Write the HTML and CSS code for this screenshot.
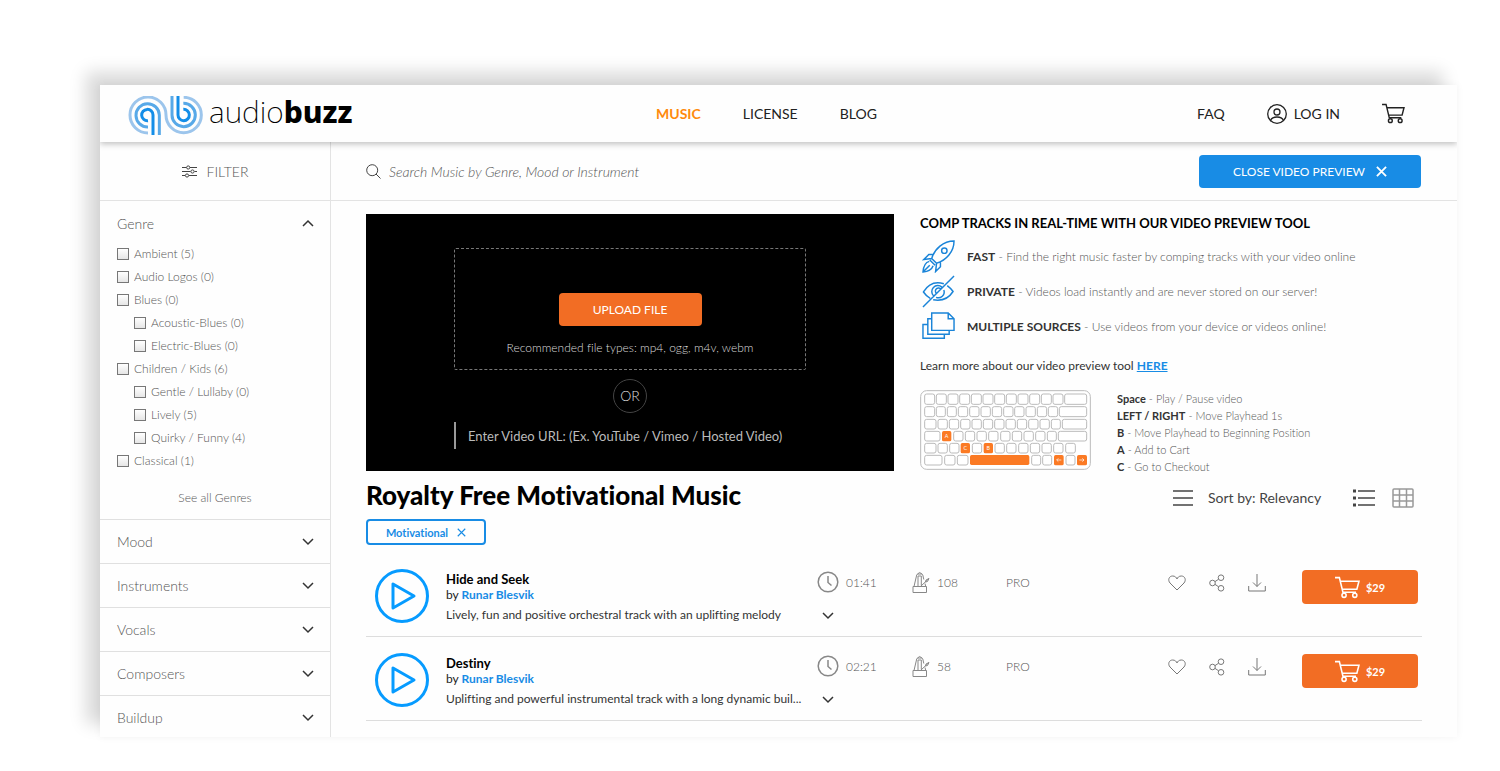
FILE: index.html
```html
<!DOCTYPE html>
<html lang="en">
<head>
  <meta charset="UTF-8">
  <meta name="viewport" content="width=device-width, initial-scale=1">
  <title>Royalty Free Motivational Music | audiobuzz</title>
  <link rel="stylesheet" href="styles.css">
</head>
<body>
  <!-- shared icons -->
  <svg class="sprite" aria-hidden="true">
    <symbol id="cart" viewBox="0 0 24 22">
      <path d="M0 1.500h4.200l3.400 14h12.600M5 5h18l-2 7.700H6.900"/>
      <circle cx="8.700" cy="18.500" r="2"/><circle cx="19" cy="18.500" r="2"/>
    </symbol>
    <symbol id="chevron" viewBox="0 0 12 8"><path d="M1 1l5 5 5-5"/></symbol>
    <symbol id="close" viewBox="0 0 12 12"><path d="M1 1l10 10M11 1L1 11"/></symbol>
    <symbol id="play" viewBox="0 0 54 54">
      <circle cx="27" cy="27" r="25.500"/><path d="M18 15v24l21-12z"/>
    </symbol>
    <symbol id="clock" viewBox="0 0 22 22">
      <circle cx="11" cy="11" r="9.800"/><path d="M11 5v6.500l3.500 3"/>
    </symbol>
    <symbol id="metronome" viewBox="0 0 18 22">
      <path d="M1 15.500h13.500v6H1zM2 15.500L4.700 4q.3-1 1.300-1h3.500q1 0 1.300 1l1 4.500M13 12.500l.7 3M6 15V5h3.300v9.500M9 15l8-7.500M13.500 11l.5-2 3-1.500-1.500 3zM5.500 3q2-3 4.500 0"/>
    </symbol>
    <symbol id="heart" viewBox="0 0 18 16">
      <path d="M9 15L2 8C-.5 5 1 1 4.700 1 7 1 8.500 2.500 9 4c.5-1.500 2-3 4.300-3C17 1 18.500 5 16 8z"/>
    </symbol>
    <symbol id="share" viewBox="0 0 16 18">
      <circle cx="3.500" cy="9" r="2.800"/><circle cx="12" cy="3.700" r="2.800"/><circle cx="12" cy="14.300" r="2.800"/>
      <path d="M6 7.600l3.500-2.300M6 10.400l3.500 2.300"/>
    </symbol>
    <symbol id="download" viewBox="0 0 18 18">
      <path d="M.700 12v5h16.600v-5M9 0v12.500M5 8.500l4 4 4-4"/>
    </symbol>
  </svg>

  <div class="window">
    <header class="header">
      <a class="logo" href="#">
        <svg class="logo-mark" viewBox="143 107 225 117" aria-hidden="true">
          <path class="ring-outer" d="M203 218a54 54 0 1 1 54-54a53 53 0 1 0 53-53"/>
          <path class="ring-middle" d="M203 200a35 35 0 1 1 34-36v60M275 107v57a35 35 0 1 0 34-35"/>
          <path class="ring-inner" d="M203 181a17 17 0 1 1 15-17v60M293 107v57a17 17 0 1 0 16-17"/>
        </svg>
        <span class="logo-text">audio<b>buzz</b></span>
      </a>
      <nav class="nav">
        <a class="active" href="#">MUSIC</a>
        <a href="#">LICENSE</a>
        <a href="#">BLOG</a>
      </nav>
      <div class="account">
        <a href="#">FAQ</a>
        <a class="login" href="#">
          <svg class="icon icon-user" viewBox="0 0 20 20" aria-hidden="true">
            <circle cx="10" cy="10" r="9.300"/><circle cx="10" cy="8" r="3"/><path d="M3.500 16.500c1-2.500 3-3.500 6.500-3.500s5.500 1 6.500 3.500"/>
          </svg>
          LOG IN
        </a>
        <a class="cart-link" href="#" aria-label="Cart"><svg class="icon icon-cart"><use href="#cart"/></svg></a>
      </div>
    </header>

    <div class="content">
      <aside class="sidebar">
        <div class="filter-title">
          <svg class="icon icon-filter" viewBox="0 0 15 13" aria-hidden="true">
            <path d="M0 2.500h4.500M8 2.500h7M0 6.500h8.500M12.500 6.500H15M0 10.500h3M7 10.500h8"/>
            <circle cx="6.200" cy="2.500" r="1.600"/><circle cx="10.500" cy="6.500" r="1.600"/><circle cx="5" cy="10.500" r="1.600"/>
          </svg>
          FILTER
        </div>
        <section class="filter-open">
          <button class="filter-head" type="button">Genre <svg class="icon icon-chevron up"><use href="#chevron"/></svg></button>
          <ul class="options">
            <li><label><input type="checkbox"> Ambient (5)</label></li>
            <li><label><input type="checkbox"> Audio Logos (0)</label></li>
            <li><label><input type="checkbox"> Blues (0)</label></li>
            <li class="sub"><label><input type="checkbox"> Acoustic-Blues (0)</label></li>
            <li class="sub"><label><input type="checkbox"> Electric-Blues (0)</label></li>
            <li><label><input type="checkbox"> Children / Kids (6)</label></li>
            <li class="sub"><label><input type="checkbox"> Gentle / Lullaby (0)</label></li>
            <li class="sub"><label><input type="checkbox"> Lively (5)</label></li>
            <li class="sub"><label><input type="checkbox"> Quirky / Funny (4)</label></li>
            <li><label><input type="checkbox"> Classical (1)</label></li>
          </ul>
          <a class="see-all" href="#">See all Genres</a>
        </section>
        <button class="filter-head closed" type="button">Mood <svg class="icon icon-chevron"><use href="#chevron"/></svg></button>
        <button class="filter-head closed" type="button">Instruments <svg class="icon icon-chevron"><use href="#chevron"/></svg></button>
        <button class="filter-head closed" type="button">Vocals <svg class="icon icon-chevron"><use href="#chevron"/></svg></button>
        <button class="filter-head closed" type="button">Composers <svg class="icon icon-chevron"><use href="#chevron"/></svg></button>
        <button class="filter-head closed" type="button">Buildup <svg class="icon icon-chevron"><use href="#chevron"/></svg></button>
      </aside>

      <main class="main">
        <div class="search-bar">
          <label class="search">
            <svg class="icon icon-search" viewBox="0 0 15 15" aria-hidden="true"><circle cx="6.200" cy="6.200" r="5.500"/><path d="M10 10l4.500 4.500"/></svg>
            <input type="text" aria-label="Search" placeholder="Search Music by Genre, Mood or Instrument">
          </label>
          <button class="close-preview" type="button">CLOSE VIDEO PREVIEW <svg class="icon icon-close"><use href="#close"/></svg></button>
        </div>

        <div class="page">
          <section class="preview">
            <div class="video">
              <div class="dropzone">
                <button class="upload" type="button">UPLOAD FILE</button>
                <p>Recommended file types: mp4, ogg, m4v, webm</p>
              </div>
              <span class="or">OR</span>
              <input class="video-url" type="text" aria-label="Video URL" placeholder="Enter Video URL: (Ex. YouTube / Vimeo / Hosted Video)">
            </div>

            <div class="info">
              <h2>COMP TRACKS IN REAL-TIME WITH OUR VIDEO PREVIEW TOOL</h2>
              <ul class="features">
                <li>
                  <svg class="icon icon-feature" viewBox="0 0 34 34" aria-hidden="true">
                    <path d="M10 19C13 9 22 1 33 1c0 11-8 20-18 23zM10 19l5 5M11.500 15L7 15l-5 5 8-1M19 22.500v5l-5 5 1-8.500M8 20.500l5.500 5.500M7.500 22c-4 1-6 5-6.500 11 5-.5 9-2.500 10.500-6.500M1 33l7-7"/>
                    <circle cx="23" cy="11" r="2.800"/>
                  </svg>
                  <p><b>FAST</b> - Find the right music faster by comping tracks with your video online</p>
                </li>
                <li>
                  <svg class="icon icon-feature" viewBox="0 0 34 34" aria-hidden="true">
                    <path d="M1 33L33 1M22.500 9Q9 5 1.500 17.500q3 4.500 7 6.500M26 11q4 3 6 6-7 11-20.500 8.500M20.500 12.500a6 6 0 0 0-8.500 9M22.500 15.500a6 6 0 0 1-8 7.500M19.500 14.500a3 3 0 0 0-5 4"/>
                  </svg>
                  <p><b>PRIVATE</b> - Videos load instantly and are never stored on our server!</p>
                </li>
                <li>
                  <svg class="icon icon-feature" viewBox="0 0 34 34" aria-hidden="true">
                    <path d="M10 3h17l6 6v12H10zM27 3v6h6M10 9H6v16h22v-4M6 15H1v14h22v-4"/>
                  </svg>
                  <p><b>MULTIPLE SOURCES</b> - Use videos from your device or videos online!</p>
                </li>
              </ul>
              <p class="learn">Learn more about our video preview tool <a href="#">HERE</a></p>
              <div class="shortcuts">
                <svg class="keyboard" viewBox="0 0 513 240" role="img" aria-label="Keyboard shortcuts">
                  <rect x="2" y="2" width="509" height="236" rx="18"/>
                  <g>
                    <rect x="14" y="12" width="30" height="31" rx="6"/><rect x="49" y="12" width="30" height="31" rx="6"/><rect x="84" y="12" width="30" height="31" rx="6"/><rect x="119" y="12" width="30" height="31" rx="6"/><rect x="154" y="12" width="30" height="31" rx="6"/><rect x="189" y="12" width="30" height="31" rx="6"/><rect x="224" y="12" width="30" height="31" rx="6"/><rect x="259" y="12" width="30" height="31" rx="6"/><rect x="294" y="12" width="30" height="31" rx="6"/><rect x="329" y="12" width="30" height="31" rx="6"/><rect x="364" y="12" width="30" height="31" rx="6"/><rect x="399" y="12" width="30" height="31" rx="6"/><rect x="434" y="12" width="66" height="31" rx="6"/>
                  </g>
                  <g>
                    <rect x="14" y="50" width="30" height="30" rx="6"/><rect x="49" y="50" width="27" height="30" rx="6"/><rect x="82" y="50" width="27" height="30" rx="6"/><rect x="115" y="50" width="28" height="30" rx="6"/><rect x="149" y="50" width="28" height="30" rx="6"/><rect x="183" y="50" width="28" height="30" rx="6"/><rect x="217" y="50" width="28" height="30" rx="6"/><rect x="251" y="50" width="28" height="30" rx="6"/><rect x="284" y="50" width="28" height="30" rx="6"/><rect x="318" y="50" width="28" height="30" rx="6"/><rect x="352" y="50" width="28" height="30" rx="6"/><rect x="385" y="50" width="28" height="30" rx="6"/><rect x="418" y="50" width="82" height="30" rx="6"/>
                  </g>
                  <g>
                    <rect x="14" y="88" width="34" height="29" rx="6"/><rect x="54" y="88" width="28" height="29" rx="6"/><rect x="88" y="88" width="28" height="29" rx="6"/><rect x="122" y="88" width="28" height="29" rx="6"/><rect x="156" y="88" width="28" height="29" rx="6"/><rect x="190" y="88" width="28" height="29" rx="6"/><rect x="224" y="88" width="28" height="29" rx="6"/><rect x="258" y="88" width="28" height="29" rx="6"/><rect x="292" y="88" width="28" height="29" rx="6"/><rect x="326" y="88" width="28" height="29" rx="6"/><rect x="360" y="88" width="28" height="29" rx="6"/><rect x="394" y="88" width="27" height="29" rx="6"/><rect x="427" y="88" width="73" height="29" rx="6"/>
                  </g>
                  <g>
                    <rect x="14" y="124" width="46" height="29" rx="6"/><rect x="101" y="124" width="28" height="29" rx="6"/><rect x="136" y="124" width="28" height="29" rx="6"/><rect x="171" y="124" width="28" height="29" rx="6"/><rect x="206" y="124" width="28" height="29" rx="6"/><rect x="242" y="124" width="28" height="29" rx="6"/><rect x="277" y="124" width="28" height="29" rx="6"/><rect x="312" y="124" width="28" height="29" rx="6"/><rect x="347" y="124" width="28" height="29" rx="6"/><rect x="382" y="124" width="27" height="29" rx="6"/><rect x="415" y="124" width="85" height="29" rx="6"/>
                  </g>
                  <g>
                    <rect x="14" y="160" width="34" height="29" rx="6"/><rect x="54" y="160" width="28" height="29" rx="6"/><rect x="89" y="160" width="28" height="29" rx="6"/><rect x="157" y="160" width="28" height="29" rx="6"/><rect x="225" y="160" width="28" height="29" rx="6"/><rect x="260" y="160" width="28" height="29" rx="6"/><rect x="296" y="160" width="28" height="29" rx="6"/><rect x="331" y="160" width="28" height="29" rx="6"/><rect x="366" y="160" width="28" height="29" rx="6"/><rect x="401" y="160" width="28" height="29" rx="6"/><rect x="437" y="160" width="29" height="29" rx="6"/>
                  </g>
                  <g>
                    <rect x="14" y="196" width="52" height="29" rx="6"/><rect x="74" y="196" width="31" height="29" rx="6"/><rect x="112" y="196" width="32" height="29" rx="6"/><rect x="335" y="196" width="27" height="29" rx="6"/><rect x="368" y="196" width="27" height="29" rx="6"/><rect x="438" y="196" width="27" height="29" rx="6"/>
                  </g>
                  <g class="keys-active">
                    <rect x="66" y="123" width="28" height="31" rx="5"/><rect x="122" y="159" width="28" height="31" rx="5"/><rect x="191" y="159" width="28" height="31" rx="5"/><rect x="150" y="195" width="178" height="30" rx="5"/><rect x="402" y="195" width="29" height="31" rx="5"/><rect x="471" y="195" width="30" height="31" rx="5"/>
                  </g>
                  <path class="key-arrow" d="M424 210h-14M415 205l-5 5 5 5M478 210h14M487 205l5 5-5 5"/>
                  <text x="80" y="145">A</text><text x="136" y="181">C</text><text x="205" y="181">B</text>
                </svg>
                <ul class="shortcut-list">
                  <li><b>Space</b> - Play / Pause video</li>
                  <li><b>LEFT / RIGHT</b> - Move Playhead 1s</li>
                  <li><b>B</b> - Move Playhead to Beginning Position</li>
                  <li><b>A</b> - Add to Cart</li>
                  <li><b>C</b> - Go to Checkout</li>
                </ul>
              </div>
            </div>
          </section>

          <div class="title-row">
            <h1>Royalty Free Motivational Music</h1>
            <div class="view-tools">
              <label class="sort">
                <svg class="icon icon-menu" viewBox="0 0 20 16" aria-hidden="true"><path d="M0 1h20M0 8h20M0 15h20"/></svg>
                <select aria-label="Sort tracks">
                  <option>Sort by: Relevancy</option>
                </select>
              </label>
              <button class="view-btn" type="button" aria-label="List view">
                <svg class="icon icon-list" viewBox="0 0 22 18"><path d="M5 2h17M5 9h17M5 16h17"/><path class="dots" d="M0 2h3M0 9h3M0 16h3"/></svg>
              </button>
              <button class="view-btn" type="button" aria-label="Grid view">
                <svg class="icon icon-grid" viewBox="0 0 22 20"><rect x="1" y="1" width="20" height="18" rx="1"/><path d="M1 7h20M1 13h20M7.500 1v18M14.500 1v18"/></svg>
              </button>
            </div>
          </div>

          <button class="tag" type="button">Motivational <svg class="icon icon-tag-close"><use href="#close"/></svg></button>

          <ul class="tracks">
            <li class="track">
              <button class="play" type="button" aria-label="Play Hide and Seek"><svg class="icon icon-play"><use href="#play"/></svg></button>
              <div class="track-text">
                <h3>Hide and Seek</h3>
                <p>by <a href="#">Runar Blesvik</a></p>
                <p class="desc">Lively, fun and positive orchestral track with an uplifting melody</p>
              </div>
              <div class="length">
                <span class="meta"><svg class="icon icon-clock"><use href="#clock"/></svg> 01:41</span>
                <button class="more" type="button" aria-label="More"><svg class="icon icon-chevron"><use href="#chevron"/></svg></button>
              </div>
              <span class="meta"><svg class="icon icon-metronome"><use href="#metronome"/></svg> 108</span>
              <span class="meta">PRO</span>
              <button class="action" type="button" aria-label="Like"><svg class="icon icon-heart"><use href="#heart"/></svg></button>
              <button class="action" type="button" aria-label="Share"><svg class="icon icon-share"><use href="#share"/></svg></button>
              <button class="action" type="button" aria-label="Download"><svg class="icon icon-download"><use href="#download"/></svg></button>
              <button class="buy" type="button"><svg class="icon icon-buy"><use href="#cart"/></svg> $29</button>
            </li>
            <li class="track">
              <button class="play" type="button" aria-label="Play Destiny"><svg class="icon icon-play"><use href="#play"/></svg></button>
              <div class="track-text">
                <h3>Destiny</h3>
                <p>by <a href="#">Runar Blesvik</a></p>
                <p class="desc">Uplifting and powerful instrumental track with a long dynamic buil...</p>
              </div>
              <div class="length">
                <span class="meta"><svg class="icon icon-clock"><use href="#clock"/></svg> 02:21</span>
                <button class="more" type="button" aria-label="More"><svg class="icon icon-chevron"><use href="#chevron"/></svg></button>
              </div>
              <span class="meta"><svg class="icon icon-metronome"><use href="#metronome"/></svg> 58</span>
              <span class="meta">PRO</span>
              <button class="action" type="button" aria-label="Like"><svg class="icon icon-heart"><use href="#heart"/></svg></button>
              <button class="action" type="button" aria-label="Share"><svg class="icon icon-share"><use href="#share"/></svg></button>
              <button class="action" type="button" aria-label="Download"><svg class="icon icon-download"><use href="#download"/></svg></button>
              <button class="buy" type="button"><svg class="icon icon-buy"><use href="#cart"/></svg> $29</button>
            </li>
          </ul>
        </div>
      </main>
    </div>
  </div>
</body>
</html>
```
FILE: styles.css
```css
* {
  box-sizing: border-box;
}

body {
  margin: 0;
  height: 100vh;
  padding: 85px 43px 34px 100px;
  overflow: hidden;
  background: #fff;
  color: #222;
  font-family: Lato, "Liberation Sans", sans-serif;
  font-size: 12px;
  font-variant-ligatures: none;
}

h1, h2, h3, p, ul {
  margin: 0;
  padding: 0;
}

ul {
  list-style: none;
}

a {
  color: inherit;
  text-decoration: none;
}

b {
  font-weight: bold;
}

button, input, select {
  padding: 0;
  border: none;
  background: none;
  color: inherit;
  font: inherit;
  font-variant-ligatures: none;
}

button {
  cursor: pointer;
}

.sprite {
  display: none;
}

.icon {
  flex: none;
  display: block;
  fill: none;
  stroke: currentColor;
  stroke-width: 1.5;
}

.window {
  display: flex;
  flex-direction: column;
  height: 100%;
  overflow: hidden;
  background: #fefefe;
  box-shadow: -14px -13px 16px rgba(0, 0, 0, 0.15), 0 0 8px rgba(0, 0, 0, 0.05);
}

/* header */
.header {
  position: relative;
  z-index: 1;
  display: grid;
  grid-template-columns: 1fr auto 1fr;
  align-items: center;
  flex: none;
  height: 57px;
  padding: 0 52px 0 28px;
  background: #fefefe;
  box-shadow: 0 2px 6px rgba(0, 0, 0, 0.25);
  font-size: 14px;
}

.logo {
  display: flex;
  align-items: center;
  gap: 6px;
  padding-top: 3px;
}

.logo-mark {
  width: 75px;
  height: 39px;
  fill: none;
  stroke-width: 9;
}

.ring-outer { stroke: #9cc5ec; }
.ring-middle { stroke: #58a9e8; }
.ring-inner { stroke: #148ee8; }

.logo-text {
  padding-bottom: 6px;
  color: #000;
  font-family: "Noto Sans", sans-serif;
  font-size: 30px;
  font-weight: 200;
  line-height: 36px;
}

.logo-text b {
  font-weight: 800;
}

.nav {
  display: flex;
  gap: 42px;
}

.nav .active {
  color: #ff8a0c;
  font-weight: bold;
}

.account {
  display: flex;
  align-items: center;
  justify-content: flex-end;
  gap: 42px;
}

.login {
  display: flex;
  align-items: center;
  gap: 7px;
}

.icon-user { width: 20px; height: 20px; stroke-width: 1.3; }
.icon-cart { width: 23px; height: 21px; }

/* layout */
.content {
  display: flex;
  flex: 1;
  min-height: 0;
}

.sidebar {
  flex: none;
  width: 231px;
  border-right: 1px solid #e3e3e3;
  color: #555;
  font-weight: 300;
}

.main {
  flex: 1;
  min-width: 0;
}

/* sidebar */
.filter-title {
  display: flex;
  align-items: center;
  justify-content: center;
  gap: 10px;
  height: 59px;
  border-bottom: 1px solid #e3e3e3;
  font-size: 14px;
}

.icon-filter { width: 15px; height: 13px; stroke: #444; stroke-width: 1; }

.filter-head {
  display: flex;
  align-items: center;
  justify-content: space-between;
  width: 100%;
  height: 44px;
  padding: 0 16px 0 17px;
  font-size: 14px;
}

.filter-head.closed {
  border-top: 1px solid #e0e0e0;
}

.icon-chevron { width: 12px; height: 8px; stroke: #333; }
.up { transform: rotate(180deg); }

.options {
  padding: 0 17px;
}

.options li {
  height: 23px;
}

.options label {
  display: flex;
  align-items: center;
  gap: 5px;
  line-height: 18px;
}

.options .sub {
  padding-left: 17px;
}

.options input {
  appearance: none;
  width: 12px;
  height: 12px;
  margin: 0;
  border: 1px solid #777;
  background: linear-gradient(#fff, #e6e6e6);
}

.see-all {
  display: block;
  padding: 14px 0 12px;
  line-height: 18px;
  text-align: center;
}

/* search bar */
.search-bar {
  display: flex;
  align-items: center;
  height: 59px;
  padding: 0 36px 0 35px;
  border-bottom: 1px solid #e3e3e3;
}

.search {
  display: flex;
  align-items: center;
  flex: 1;
  gap: 8px;
}

.search input {
  flex: 1;
  font-size: 14px;
  font-style: italic;
  font-weight: 300;
  outline: none;
}

.search input::placeholder {
  color: #555;
}

.icon-search { width: 15px; height: 15px; stroke: #444; stroke-width: 1; }

.close-preview {
  display: flex;
  align-items: center;
  justify-content: center;
  gap: 11px;
  width: 222px;
  height: 33px;
  border-radius: 4px;
  background: #188ce5;
  color: #fff;
}

.icon-close { width: 11px; height: 11px; stroke-width: 2; }

/* video preview */
.page {
  padding: 13px 35px 0 35px;
}

.preview {
  display: grid;
  grid-template-columns: 1fr 1fr;
  align-items: start;
}

.video {
  display: flex;
  flex-direction: column;
  align-items: center;
  padding: 34px 0 22px;
  background: #000;
  color: #ddd;
}

.dropzone {
  display: flex;
  flex-direction: column;
  align-items: center;
  width: 352px;
  height: 122px;
  padding-top: 44px;
  border: 1px dashed #777;
  border-radius: 2px;
  font-weight: 300;
}

.dropzone p {
  margin-top: 13px;
  line-height: 18px;
}

.upload {
  width: 143px;
  height: 33px;
  border-radius: 4px;
  background: #f26d24;
  color: #fff;
  font-weight: 400;
}

.or {
  width: 34px;
  height: 34px;
  margin: 9px 0;
  border: 1px solid #444;
  border-radius: 50%;
  font-size: 14px;
  font-weight: 300;
  line-height: 32px;
  text-align: center;
}

.video-url {
  width: 352px;
  height: 27px;
  padding-left: 12px;
  border-left: 2px solid #999;
  font-size: 13px;
  outline: none;
}

.video-url::placeholder {
  color: #bbb;
}

.info {
  padding-left: 26px;
  color: #555;
  font-weight: 300;
}

.info h2 {
  color: #000;
  font-size: 13px;
  font-weight: bold;
  line-height: 18px;
}

.features {
  margin-top: 7px;
}

.features li {
  display: flex;
  align-items: center;
  gap: 12px;
  height: 35px;
  padding-left: 2px;
}

.icon-feature { width: 33px; height: 33px; stroke: #1a84d8; }

.info b {
  color: #333;
}

.learn {
  margin-top: 13px;
  color: #333;
  font-weight: 400;
  line-height: 18px;
}

.learn a {
  color: #188ce5;
  font-weight: bold;
  text-decoration: underline;
}

.shortcuts {
  display: flex;
  gap: 26px;
  margin-top: 15px;
}

.shortcut-list {
  font-size: 11px;
  line-height: 17px;
}

.keyboard {
  width: 171px;
  height: 80px;
  fill: #fff;
  stroke: #bbb;
  stroke-width: 3;
}

.keys-active { fill: #fb7a24; stroke: none; }
.key-arrow { fill: none; stroke: #fff; stroke-width: 2; }

.keyboard text {
  fill: #fff;
  stroke: none;
  font-size: 16px;
  font-weight: 400;
  text-anchor: middle;
}

/* title and sorting */
.title-row {
  display: flex;
  align-items: center;
  justify-content: space-between;
  height: 34px;
  margin-top: 4px;
}

h1 {
  padding-bottom: 2px;
  color: #000;
  font-size: 26px;
  font-weight: 900;
}

.view-tools {
  display: flex;
  align-items: center;
  gap: 17px;
  padding: 3px 8px 0 0;
  color: #444;
}

.sort {
  display: flex;
  align-items: center;
  gap: 15px;
  margin-right: 14px;
  font-size: 14px;
}

.sort select {
  appearance: none;
}

.icon-menu { width: 20px; height: 16px; }
.icon-list { width: 22px; height: 18px; }
.icon-grid { width: 22px; height: 20px; stroke: #999; }
.dots { stroke-width: 3; }

.tag {
  display: flex;
  align-items: center;
  justify-content: center;
  gap: 9px;
  width: 120px;
  height: 26px;
  margin-top: 6px;
  border: 2px solid #188ce5;
  border-radius: 4px;
  color: #188ce5;
  font-size: 11px;
  font-weight: bold;
}

.icon-tag-close { width: 9px; height: 9px; }

/* tracks */
.tracks {
  margin-top: 8px;
}

.track {
  display: grid;
  grid-template-columns: 80px 1fr 95px 94px 162px 41px 39px 54px 116px;
  align-items: start;
  height: 84px;
  padding: 16px 4px 0 0;
  border-bottom: 1px solid #ddd;
}

.play {
  padding-left: 9px;
}

.icon-play {
  width: 54px;
  height: 54px;
  stroke: #069bff;
  stroke-width: 3;
  stroke-linejoin: round;
}

.track-text {
  min-width: 0;
  padding: 2px 4px 0 0;
  line-height: 16px;
}

.track-text h3 {
  color: #000;
  font-size: 13px;
}

.track-text a {
  color: #188ce5;
  font-weight: bold;
}

.track-text .desc {
  margin-top: 4px;
  overflow: hidden;
  text-overflow: ellipsis;
  white-space: nowrap;
  color: #333;
}

.meta {
  display: flex;
  align-items: center;
  gap: 7px;
  height: 26px;
  color: #555;
  font-weight: 300;
}

.icon-clock { width: 22px; height: 22px; stroke: #888; }
.icon-metronome { width: 18px; height: 22px; stroke: #888; stroke-width: 1; }

.more {
  margin-top: 17px;
  padding-left: 5px;
}

.action {
  display: flex;
  align-items: center;
  height: 28px;
  color: #777;
}

.icon-heart { width: 18px; height: 16px; stroke-width: 1; }
.icon-share { width: 16px; height: 18px; stroke-width: 1; }
.icon-download { width: 18px; height: 18px; stroke-width: 1; }

.buy {
  display: flex;
  align-items: center;
  justify-content: center;
  gap: 6px;
  height: 34px;
  margin-top: 1px;
  border-radius: 4px;
  background: #f26d24;
  color: #fff;
  font-size: 11px;
  font-weight: bold;
}

.icon-buy { width: 25px; height: 23px; }
```
